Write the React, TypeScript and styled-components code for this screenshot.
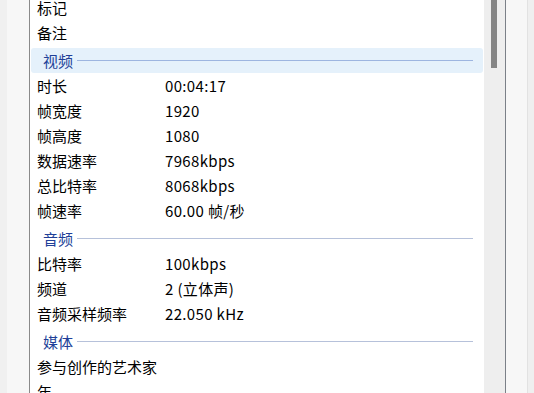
import React from "react";
import styled, { createGlobalStyle } from "styled-components";

const GlobalStyle = createGlobalStyle`
  html, body {
    margin: 0;
    padding: 0;
    background: #ffffff;
  }
  body {
    font-family: "Noto Sans CJK SC", "Noto Sans", sans-serif;
  }
`;

const Window = styled.div`
  display: flex;
  width: 534px;
  height: 393px;
  overflow: hidden;
`;

const OuterEdge = styled.div`
  width: 7px;
  flex: none;
  background: #f0f0f0;
`;

const Rail = styled.div`
  width: 22px;
  flex: none;
  background: #f7f7f7;
  border-right: 1px solid #8a8a8a;
`;

const Pane = styled.div`
  width: 454px;
  flex: none;
  background: #ffffff;
  overflow: hidden;
`;

const List = styled.div`
  display: flex;
  flex-direction: column;
  margin-top: -5px;
`;

const Row = styled.div`
  display: grid;
  grid-template-columns: 128px 1fr;
  align-items: center;
  height: 25px;
  padding-left: 7px;
  font-size: 15px;
  color: #000000;
  white-space: nowrap;
`;

const Label = styled.span``;

const Value = styled.span`
  letter-spacing: 0.35px;
`;

const GroupHeader = styled.div<{ $active?: boolean }>`
  display: flex;
  align-items: center;
  gap: 4px;
  height: 25px;
  margin: 3px 1px 0 1px;
  padding: 0 10px 0 12px;
  border-radius: 3px;
  background: ${({ $active }) => ($active ? "#e5f1fb" : "transparent")};
  font-size: 15px;
  color: #213f98;

  &::after {
    content: "";
    flex: 1;
    height: 1px;
    background: ${({ $active }) => ($active ? "#9db5e0" : "#b6c1da")};
  }
`;

const Track = styled.div`
  width: 22px;
  flex: none;
  box-sizing: border-box;
  padding-left: 7px;
  background: #eeeeee;
  border-right: 1px solid #7b8088;
`;

const Thumb = styled.div`
  width: 6px;
  height: 68px;
  background: #858585;
`;

const SidePanel = styled.div`
  width: 22px;
  flex: none;
  box-sizing: border-box;
  background: #f7f7f7;
  border-right: 1px solid #e2e2e2;
`;

const FarEdge = styled.div`
  flex: 1;
  background: #efefef;
`;

type Item = { label: string; value?: string };
type Group = { title: string; active?: boolean; items: Item[] };

const lead: Item[] = [{ label: "标记" }, { label: "备注" }];

const groups: Group[] = [
  {
    title: "视频",
    active: true,
    items: [
      { label: "时长", value: "00:04:17" },
      { label: "帧宽度", value: "1920" },
      { label: "帧高度", value: "1080" },
      { label: "数据速率", value: "7968kbps" },
      { label: "总比特率", value: "8068kbps" },
      { label: "帧速率", value: "60.00 帧/秒" },
    ],
  },
  {
    title: "音频",
    items: [
      { label: "比特率", value: "100kbps" },
      { label: "频道", value: "2 (立体声)" },
      { label: "音频采样频率", value: "22.050 kHz" },
    ],
  },
  {
    title: "媒体",
    items: [{ label: "参与创作的艺术家" }, { label: "年" }],
  },
];

const PropRow: React.FC<Item> = ({ label, value }) => (
  <Row>
    <Label>{label}</Label>
    <Value>{value}</Value>
  </Row>
);

export default function App() {
  return (
    <>
      <GlobalStyle />
      <Window>
        <OuterEdge />
        <Rail />
        <Pane>
          <List>
            {lead.map((it) => (
              <PropRow key={it.label} {...it} />
            ))}
            {groups.map((g) => (
              <React.Fragment key={g.title}>
                <GroupHeader $active={g.active}>{g.title}</GroupHeader>
                {g.items.map((it) => (
                  <PropRow key={it.label} {...it} />
                ))}
              </React.Fragment>
            ))}
          </List>
        </Pane>
        <Track>
          <Thumb />
        </Track>
        <SidePanel />
        <FarEdge />
      </Window>
    </>
  );
}
